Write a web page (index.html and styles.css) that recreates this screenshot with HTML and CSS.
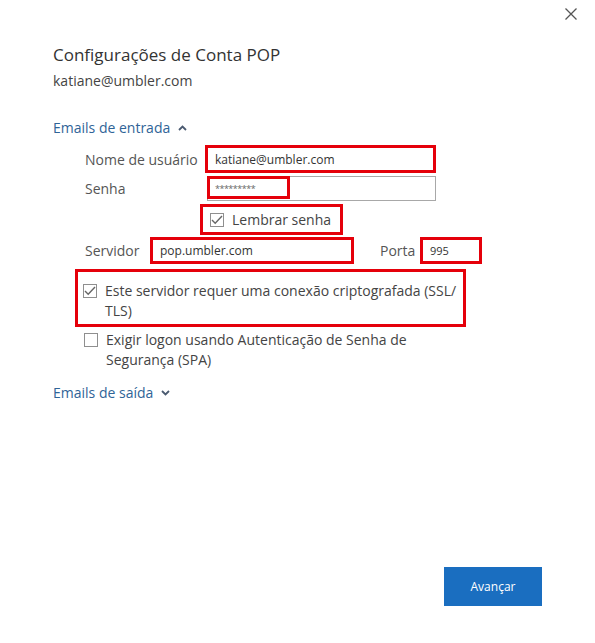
FILE: index.html
```html
<!DOCTYPE html>
<html lang="pt">
<head>
    <meta charset="UTF-8">
    <title>Configurações de Conta POP</title>
    <link rel="stylesheet" href="styles.css">
</head>
<body>
    <div class="dialog">
        <div class="close-row">
            <button class="close-button" aria-label="Fechar">
                <svg width="12" height="12" viewBox="0 0 12 12"><path d="M0.5 0.5 L11.5 11.5 M11.5 0.5 L0.5 11.5" stroke="#555" stroke-width="1.3" fill="none"/></svg>
            </button>
        </div>

        <h1 class="title">Configurações de Conta POP</h1>
        <p class="account">katiane@umbler.com</p>

        <div class="section-toggle">
            Emails de entrada
            <svg class="chevron" width="9" height="6" viewBox="0 0 9 6"><path d="M1 5 L4.5 1.5 L8 5" stroke="#4a5a70" stroke-width="1.8" fill="none"/></svg>
        </div>

        <div class="form">
            <div class="row row-user">
                <label class="label label-wide">Nome de usuário</label>
                <div class="field field-user mark">
                    <span class="value">katiane@umbler.com</span>
                </div>
            </div>

            <div class="row row-pass">
                <label class="label label-wide">Senha</label>
                <div class="field field-pass">
                    <span class="value dots">*********</span>
                    <span class="overlay overlay-pass"></span>
                </div>
            </div>

            <div class="row row-remember">
                <div class="check-inline mark">
                    <span class="checkbox checked">
                        <svg width="12" height="10" viewBox="0 0 12 10"><path d="M1 5 L4.2 8.2 L11 1" stroke="#666" stroke-width="1.4" fill="none"/></svg>
                    </span>
                    <span class="check-text">Lembrar senha</span>
                </div>
            </div>

            <div class="row row-server">
                <label class="label label-short">Servidor</label>
                <div class="field field-server mark">
                    <span class="value">pop.umbler.com</span>
                </div>
                <label class="label label-port">Porta</label>
                <div class="field field-port mark">
                    <span class="value small">995</span>
                </div>
            </div>

            <div class="option option-ssl mark">
                <span class="checkbox checked">
                    <svg width="12" height="10" viewBox="0 0 12 10"><path d="M1 5 L4.2 8.2 L11 1" stroke="#666" stroke-width="1.4" fill="none"/></svg>
                </span>
                <span class="option-text">Este servidor requer uma conexão criptografada (SSL/ TLS)</span>
            </div>

            <div class="option option-spa">
                <span class="checkbox"></span>
                <span class="option-text">Exigir logon usando Autenticação de Senha de Segurança (SPA)</span>
            </div>
        </div>

        <div class="section-toggle section-out">
            Emails de saída
            <svg class="chevron" width="9" height="6" viewBox="0 0 9 6"><path d="M1 1 L4.5 4.5 L8 1" stroke="#4a5a70" stroke-width="1.8" fill="none"/></svg>
        </div>

        <div class="footer">
            <button class="next-button">Avançar</button>
        </div>
    </div>
</body>
</html>
```

FILE: styles.css
```css
body {
    margin: 0;
    background-color: #fff;
    font-family: 'Open Sans', 'Noto Sans', Arial, sans-serif;
    color: #444;
}

.dialog {
    box-sizing: border-box;
    min-height: 643px;
    padding: 8px 53px 37px 53px;
    display: flex;
    flex-direction: column;
}

.close-row {
    display: flex;
    justify-content: flex-end;
    margin-right: -35px;
    height: 14px;
}

.close-button {
    background: none;
    border: none;
    padding: 0;
    width: 12px;
    height: 12px;
    cursor: pointer;
}

.title {
    margin: 21px 0 0 0;
    font-size: 17px;
    font-weight: 400;
    line-height: 24px;
    color: #333;
}

.account {
    margin: 4px 0 0 0;
    font-size: 14px;
    line-height: 20px;
    color: #444;
}

.section-toggle {
    margin-top: 27px;
    font-size: 14px;
    line-height: 20px;
    color: #2f6497;
    display: flex;
    align-items: center;
    gap: 8px;
}

.section-out {
    margin-top: 13px;
}

.form {
    padding-left: 32px;
    margin-top: 9px;
}

.row {
    display: flex;
    align-items: center;
}

.label {
    font-size: 14px;
    color: #555;
}

.label-wide {
    width: 122px;
}

.label-short {
    width: 67px;
}

.label-port {
    margin-left: 28px;
    width: 42px;
}

.field {
    box-sizing: border-box;
    position: relative;
    border: 1px solid #a8a8a8;
    background: #fff;
    display: flex;
    align-items: center;
    padding-left: 7px;
}

.value {
    font-size: 12px;
    color: #333;
}

.value.small {
    font-size: 11px;
}

.dots {
    font-size: 9px;
    letter-spacing: -0.5px;
    color: #666;
}

.mark {
    position: relative;
}

.mark::after {
    content: "";
    position: absolute;
    inset: -3px;
    border: 3px solid #e5000a;
    pointer-events: none;
}

.overlay {
    position: absolute;
    border: 3px solid #e5000a;
}

.overlay-pass {
    left: -1px;
    top: -1px;
    width: 77px;
    height: 17px;
}

.row-user .field-user {
    width: 227px;
    height: 24px;
    border-color: #9fb4cc;
}

.row-pass {
    margin-top: 5px;
}

.field-pass {
    width: 229px;
    height: 25px;
}

.row-remember {
    margin-top: 4px;
    padding-left: 116px;
}

.check-inline {
    display: flex;
    align-items: center;
    gap: 8px;
    padding: 5px 11px 5px 9px;
}

.check-inline::after {
    inset: -1px;
}

.checkbox {
    box-sizing: border-box;
    width: 14px;
    height: 14px;
    border: 1px solid #8f8f8f;
    display: inline-flex;
    align-items: center;
    justify-content: center;
    flex-shrink: 0;
}

.check-text {
    font-size: 14px;
    color: #444;
}

.row-server {
    margin-top: 5px;
}

.field-server {
    width: 200px;
    height: 23px;
}

.field-port {
    width: 58px;
    height: 23px;
}

.option {
    display: flex;
    align-items: flex-start;
    gap: 8px;
    font-size: 14px;
    line-height: 20px;
    color: #444;
}

.option .checkbox {
    margin-top: 3px;
}

.option-ssl {
    margin: 8px 0 0 -2px;
    width: 385px;
    padding: 11px 0 5px 0;
}

.option-ssl::after {
    inset: -1px 2px -1px -8px;
}

.option-spa {
    margin: 4px 0 0 -1px;
    width: 365px;
}

.footer {
    margin-top: auto;
    display: flex;
    justify-content: flex-end;
}

.next-button {
    width: 98px;
    height: 39px;
    border: none;
    background-color: #1a6ec0;
    color: #fff;
    font-family: 'Open Sans', 'Noto Sans', Arial, sans-serif;
    font-size: 12px;
    cursor: pointer;
}
```
